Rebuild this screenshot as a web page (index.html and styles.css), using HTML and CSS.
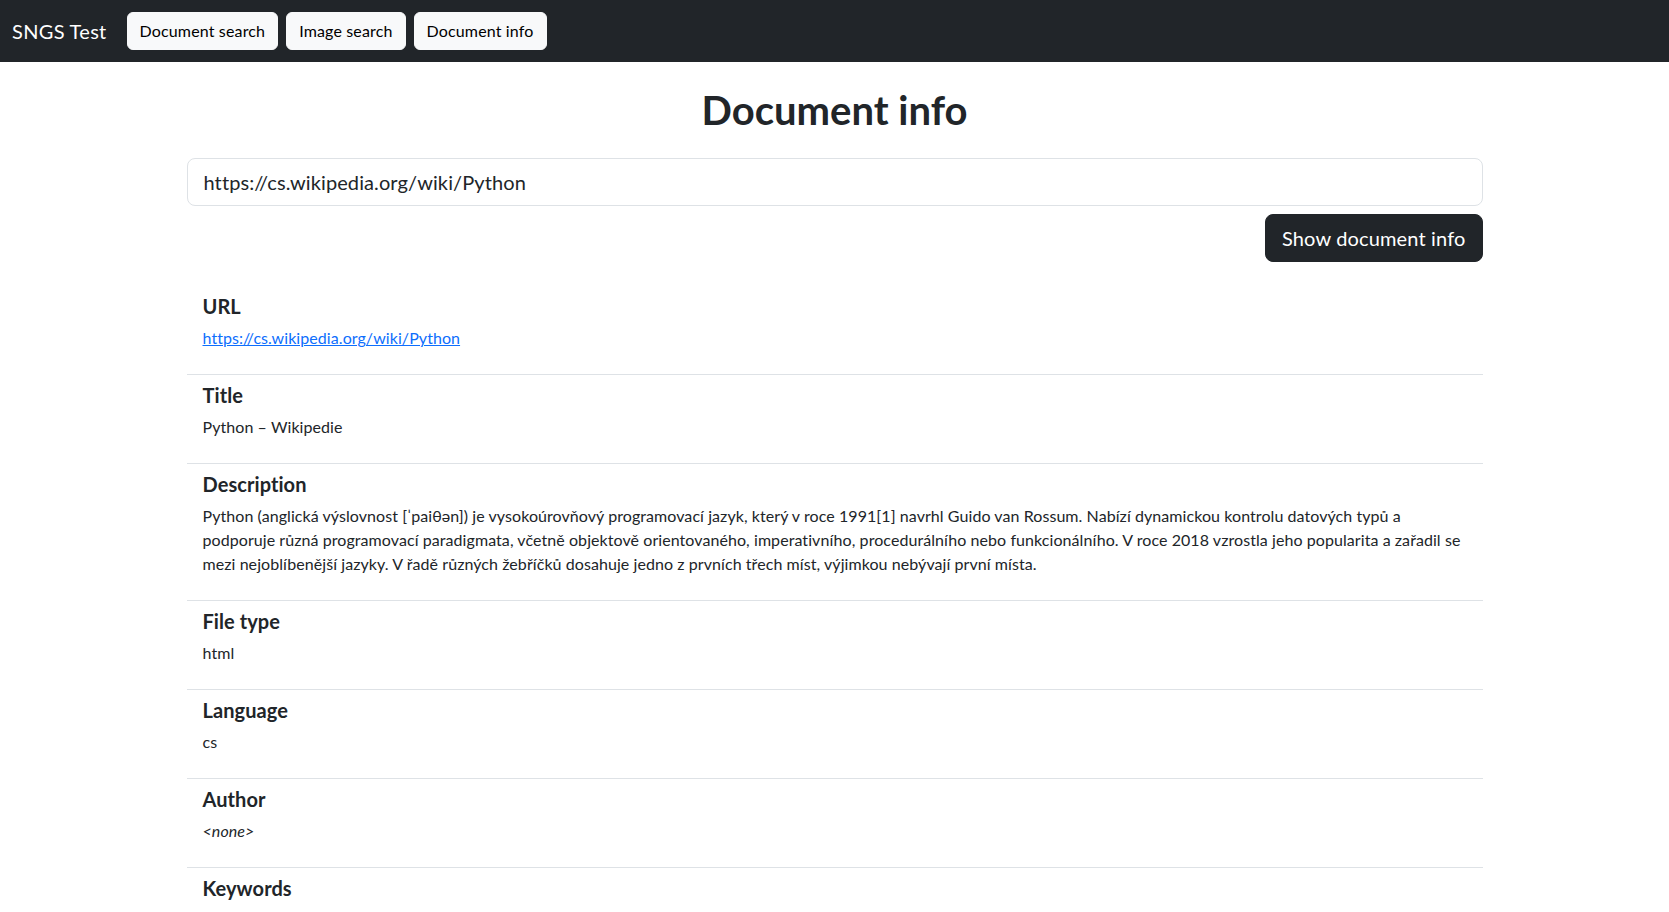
FILE: index.html
```html
<!DOCTYPE html>
<html lang="cs">
<head>
<meta charset="utf-8">
<title>Document info</title>
<link rel="stylesheet" href="styles.css">
</head>
<body>
<nav class="navbar">
  <a class="brand" href="#">SNGS Test</a>
  <div class="nav-buttons">
    <a class="btn-light" href="#">Document search</a>
    <a class="btn-light" href="#">Image search</a>
    <a class="btn-light" href="#">Document info</a>
  </div>
</nav>
<main class="container">
  <h1 class="page-title">Document info</h1>
  <form class="url-form">
    <input class="url-input" type="text" value="https://cs.wikipedia.org/wiki/Python">
    <div class="form-actions">
      <button class="btn-dark" type="button">Show document info</button>
    </div>
  </form>
  <ul class="info-list">
    <li class="info-item">
      <h5 class="info-label">URL</h5>
      <p class="info-value"><a class="link" href="#">https://cs.wikipedia.org/wiki/Python</a></p>
    </li>
    <li class="info-item">
      <h5 class="info-label">Title</h5>
      <p class="info-value">Python – Wikipedie</p>
    </li>
    <li class="info-item">
      <h5 class="info-label">Description</h5>
      <p class="info-value">Python (anglická výslovnost [ˈpaiθən]) je vysokoúrovňový programovací jazyk, který v roce 1991[1] navrhl Guido van Rossum. Nabízí dynamickou kontrolu datových typů a podporuje různá programovací paradigmata, včetně objektově orientovaného, imperativního, procedurálního nebo funkcionálního. V roce 2018 vzrostla jeho popularita a zařadil se mezi nejoblíbenější jazyky. V řadě různých žebříčků dosahuje jedno z prvních třech míst, výjimkou nebývají první místa.</p>
    </li>
    <li class="info-item">
      <h5 class="info-label">File type</h5>
      <p class="info-value">html</p>
    </li>
    <li class="info-item">
      <h5 class="info-label">Language</h5>
      <p class="info-value">cs</p>
    </li>
    <li class="info-item">
      <h5 class="info-label">Author</h5>
      <p class="info-value"><em>&lt;none&gt;</em></p>
    </li>
    <li class="info-item">
      <h5 class="info-label">Keywords</h5>
      <p class="info-value"><em>&lt;none&gt;</em></p>
    </li>
  </ul>
</main>
</body>
</html>
```
FILE: styles.css
```css
* { box-sizing: border-box; }
html, body { margin: 0; padding: 0; }
body {
  font-family: "Lato", "Liberation Sans", sans-serif;
  font-size: 16px;
  line-height: 1.5;
  letter-spacing: 0.07px;
  color: #212529;
  background: #fff;
}
.navbar {
  background: #212529;
  display: flex;
  align-items: center;
  padding: 12px 12px;
  height: 62px;
}
.brand {
  color: #fff;
  text-decoration: none;
  font-size: 20px;
  line-height: 30px;
  margin-right: 20px;
  letter-spacing: 0.3px;
}
.nav-buttons { display: flex; gap: 8px; }
.btn-light {
  display: inline-block;
  background: #f8f9fa;
  border: 1px solid #f8f9fa;
  color: #000;
  text-decoration: none;
  padding: 6px 12px;
  line-height: 24px;
  border-radius: 6px;
  font-size: 16px;
  letter-spacing: 0.15px;
}
.container {
  max-width: 1320px;
  margin: 0 auto;
  padding: 0 12px;
}
.page-title {
  text-align: center;
  font-size: 40px;
  line-height: 48px;
  font-weight: 700;
  margin: 24px 0;
  letter-spacing: 0;
}
.url-form { margin: 0; }
.url-input {
  display: block;
  width: 100%;
  font-family: inherit;
  font-size: 20px;
  line-height: 30px;
  padding: 8px 16px;
  border: 1px solid #dee2e6;
  border-radius: 8px;
  color: #212529;
  outline: none;
  letter-spacing: 0.1px;
}
.form-actions {
  display: flex;
  justify-content: flex-end;
  margin-top: 8px;
}
.btn-dark {
  font-family: inherit;
  background: #212529;
  color: #fff;
  border: 1px solid #212529;
  border-radius: 8px;
  font-size: 20px;
  line-height: 30px;
  padding: 8px 16px;
  cursor: pointer;
  letter-spacing: 0.15px;
}
.info-list {
  list-style: none;
  margin: 24px 0 0;
  padding: 0;
}
.info-item {
  padding: 8px 16px;
  border-bottom: 1px solid #dee2e6;
}
.info-label {
  margin: 0 0 8px;
  font-size: 20px;
  line-height: 24px;
  font-weight: 700;
}
.info-value {
  margin: 0 0 16px;
}
.link { color: #0d6efd; text-decoration: underline; }
```
